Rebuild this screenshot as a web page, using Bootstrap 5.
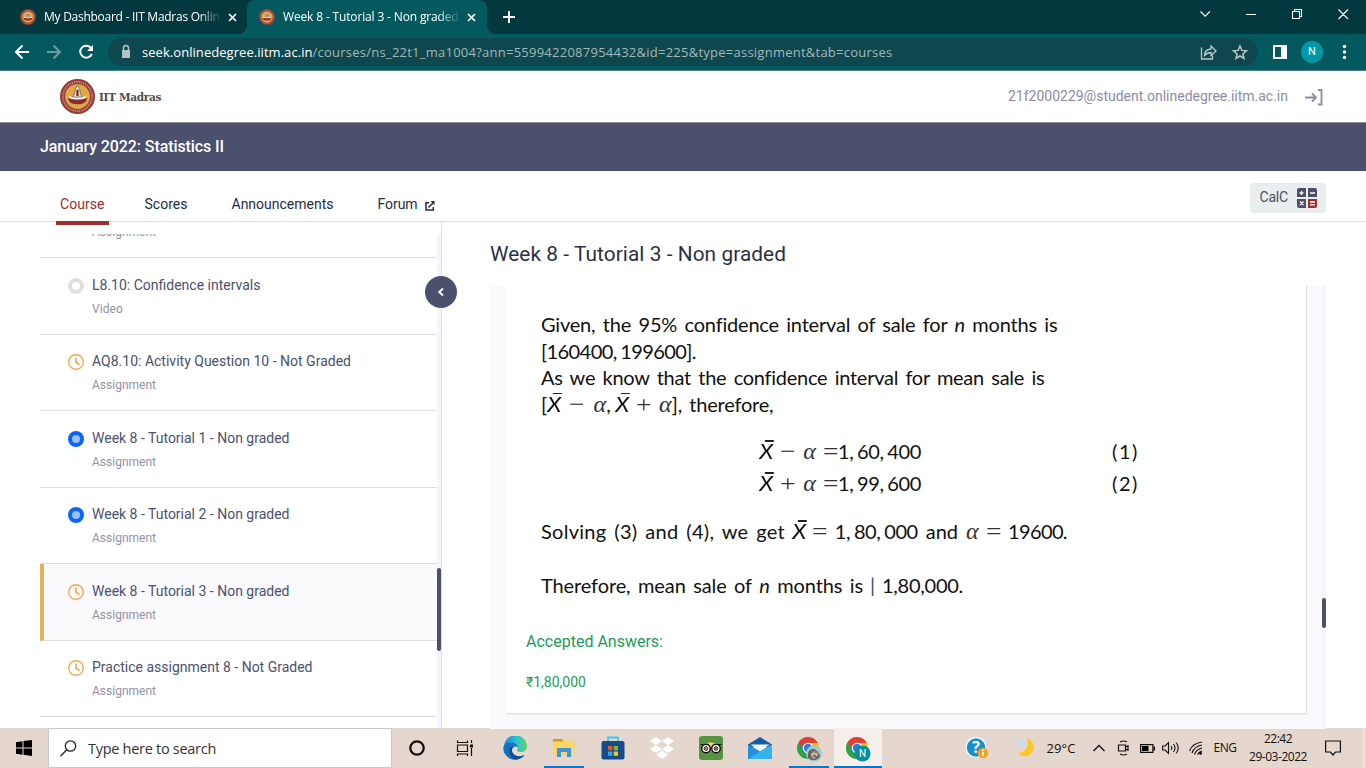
<!DOCTYPE html>
<html lang="en">
<head>
<meta charset="utf-8">
<title>Week 8 - Tutorial 3 - Non graded</title>
<link href="https://cdn.jsdelivr.net/npm/bootstrap@5.3.0/dist/css/bootstrap.min.css" rel="stylesheet">
<script src="https://cdn.jsdelivr.net/npm/bootstrap@5.3.0/dist/js/bootstrap.bundle.min.js"></script>
<style>
body{width:1366px;height:768px;overflow:hidden;font-family:Roboto,sans-serif;font-size:14px;line-height:20px;color:#4b516c;background:#fff}
svg{display:block;flex:none}
[data-w]{white-space:nowrap;display:inline-block}
.segoe{font-family:"Open Sans",sans-serif}
/* browser chrome */
.tabstrip{height:34px;background:#02383e;color:#fff;font-size:12px}
.tab-a{width:247px;padding-left:20px}
.tab-b{width:240px;padding-left:12px;background:#04595f;border-radius:8px 8px 0 0;position:relative}
.tab-b::before,.tab-b::after{content:"";position:absolute;bottom:0;width:8px;height:8px}
.tab-b::before{left:-8px;background:radial-gradient(circle at 0 0,transparent 7.5px,#04595f 8px)}
.tab-b::after{right:-8px;background:radial-gradient(circle at 100% 0,transparent 7.5px,#04595f 8px)}
.tab-label{width:176px;overflow:hidden;margin-left:8px;-webkit-mask-image:linear-gradient(90deg,#000 88%,transparent 101%)}
.toolbar{height:37px;background:#04595f;border-bottom:1px solid #4a8388}
.omni{width:1150px;height:28px;border-radius:14px;background:#0e474d;color:#a3b8ba;font-size:13px}
.avatar-n{width:22px;height:22px;border-radius:50%;background:#0097a7;color:#fff;font-size:11px}
/* site */
.site-head{height:52px;border-bottom:1px solid #8c8a90;padding-left:60px}
.brand-name{font:bold 10.5px/20px "DejaVu Serif",serif;color:#4c4c4c}
.mail-id{color:#8d8ba3;margin-bottom:1px}
.title-bar{height:48px;background:#4b516c;color:#fff;font-size:16px;font-weight:500;padding-left:40px}
.tabs-row{height:51px;border-bottom:1px solid #dfdfdf;color:#252b3f}
.tabs-row .tab-item{padding-top:23px;height:54px}
.tabs-row .current{color:#a02c2c;border-bottom:4px solid #a02c2c;width:53px;margin-left:56px;padding-left:4px}
.calc-btn{width:76px;height:30px;background:#eaeeee;border-radius:4px;margin:12px 40px 0 auto;padding-left:9.5px;color:#4b516c}
.work{height:506px}
.side{width:442px;border-right:1px solid #dcdce0;padding:12px 0 0 40px}
.side-list{width:397px;overflow:hidden}
.lesson{height:76.5px;border-bottom:1px solid #dfdfdf;padding:16.8px 0 0 28px}
.lesson.picked{background:#fafafd;border-left:4px solid #e2b25f;padding-left:24px}
.lesson svg{margin:3.2px 8px 0 0}
.lesson .kind{font-size:12px;line-height:18px;color:#9391a6;margin-top:5px}
.track{width:4px;background:#f3f6fe}
.track i{display:block;width:4px;background:#4b516c;border-radius:2px}
.fold{position:absolute;left:425px;top:54px;width:32px;height:32px;border-radius:50%;background:#4b516c}
.pane{width:836px;margin-left:48px;padding-top:19px}
.pane h1{font-size:20.8px;line-height:26px;font-weight:400;color:#2b3044;margin:0 0 19px;height:26px}
.scroller{height:443px;background:#fafafd;padding-left:16px}
.sheet{width:801px;height:428px;background:#fff;border-right:1px solid #dfdfe3;border-bottom:1px solid #dfdfe3;padding:25px 0 0 20px;box-shadow:0 1px 1px #f1f1f4}
.tex{font:20px/26.5px Lato,sans-serif;color:#111;padding-left:15px;width:640px;word-spacing:2.5px}
.tex .ln{height:26.5px;white-space:nowrap;display:flex;justify-content:space-between}
.num{word-spacing:-1px}
.xb{font-style:italic;position:relative;font-size:20.5px;transform:scaleX(1.12)}
.xb::before{content:"";position:absolute;left:4.5px;top:2px;width:8px;height:1.6px;background:#222}
.al{font-family:"Liberation Serif",serif;font-style:italic;font-size:24px;color:#333}
.op{font-family:"Liberation Serif",serif;font-size:24px;color:#333;transform:scaleX(1.15)}
.ok{color:#1d9a59}
/* taskbar */
.taskbar{height:40px;background:#e6d7ce;color:#111}
.start{width:48px;flex:none}
.find{width:344px;flex:none;border:1px solid #c9c9c9;background:#fff;padding-left:11px;font-size:15px;color:#333}
.app{width:49px;height:40px;position:relative;display:flex;align-items:center;justify-content:center;flex:none}
.app.open::after{content:"";position:absolute;left:5px;width:40px;bottom:0;height:2px;background:#0078d7}
.app.front{background:linear-gradient(#f4efeb,#f4efeb) 1px 0/48px 40px no-repeat}
.app.front::after{left:1px;width:48px}
.tray{display:grid;flex:none;grid-template-columns:50px 47px 38px 24px 24px 24px 24px 26px 32px 74px 36px 10px 5px;margin-left:70px;place-items:center;font-size:12px}
.clock{line-height:18px;font-size:12px}
</style>
</head>
<body>
<svg width="0" height="0" class="position-absolute">
<defs>
<g id="seal"><circle cx="18" cy="18" r="18" fill="#943b35"/><circle cx="18" cy="18" r="15" fill="none" stroke="#c98f86" stroke-width="2" stroke-dasharray="1.2 1.1"/><circle cx="18" cy="18" r="12.8" fill="#dca848"/><path d="M8 19.500h20q-1 6.500-10 6.500t-10-6.500z" fill="#8b2c25"/><path d="M9 18.600q9 3 18 0" stroke="#fff" stroke-width="2" fill="none"/><path d="M18 6q3 5 3 9.500l2 3H13l2-3q0-4.500 3-9.500z" fill="#f3ead8" stroke="#555" stroke-width=".7"/><path d="M16.800 11h2.400v6.500h-2.400z" fill="#8b2c25"/></g>
<g id="clk" fill="none" stroke="#f6a94c"><circle cx="8" cy="8" r="7.300" stroke-width="1.400"/><path d="M8 3.500V8.300l3.600 2.300" stroke-width="1.700"/></g>
<g id="dot"><circle cx="8" cy="8" r="8" fill="#0b64f9"/><circle cx="8" cy="8" r="4" fill="#9bc1fc"/></g>
<g id="chrome"><circle cx="12" cy="12" r="11" fill="#fbc116"/><path d="M12 12L2.500 6.500A11 11 0 0 0 11.500 23l5-8z" fill="#2aa150"/><path d="M12 1A11 11 0 0 1 21.800 7H12L5.500 11 2.500 6.500A11 11 0 0 1 12 1z" fill="#dd4037"/><circle cx="12" cy="12" r="5.300" fill="#fff"/><circle cx="12" cy="12" r="4.200" fill="#3478e5"/></g>
<linearGradient id="eg" x1="0" y1="0" x2="1" y2="0"><stop offset="0" stop-color="#168bd9"/><stop offset=".55" stop-color="#2cc3d2"/><stop offset="1" stop-color="#63d45a"/></linearGradient>
</defs></svg>

<div class="tabstrip segoe d-flex">
  <div class="tab-a d-flex align-items-center"><svg width="16" height="16" viewBox="0 0 36 36"><use href="#seal"/></svg><div class="tab-label"><span data-w="175.500">My Dashboard - IIT Madras Onlin</span></div>
    <svg class="ms-2" width="9" height="9" stroke="#fff" stroke-width="1.700"><path d="M1 1l7 7M8 1l-7 7"/></svg></div>
  <div class="tab-b d-flex align-items-center"><svg width="16" height="16" viewBox="0 0 36 36"><use href="#seal"/></svg><div class="tab-label"><span data-w="175.500">Week 8 - Tutorial 3 - Non graded</span></div>
    <svg class="ms-2" width="9" height="9" stroke="#fff" stroke-width="1.700"><path d="M1 1l7 7M8 1l-7 7"/></svg></div>
  <svg class="align-self-center" style="margin-left:16px" width="12" height="12" stroke="#fff" stroke-width="2"><path d="M6 0v12M0 6h12"/></svg>
  <svg class="ms-auto" width="170" height="34" fill="none" stroke="#fff" stroke-width="1.100"><path d="M4.500 11.500l4.700 4.700 4.700-4.700M50 14.500h10M96.500 11.500h7v7h-7zM98.500 11v-1.500h7v7h-1.500M142.500 9.500l9.500 9.500M152 9.500l-9.500 9.500"/></svg>
</div>
<div class="toolbar d-flex align-items-center">
  <svg width="108" height="36" fill="none" stroke="#fff" stroke-width="2"><path d="M29 18H16.500M22.500 11.500L16 18l6.500 6.500"/><path d="M47 18h12.500M53.500 11.500L60 18l-6.500 6.500" stroke="#6a9b9f"/><path d="M91 14a6 6 0 1 0 .8 6"/><path d="M93 11v6h-6z" fill="#fff" stroke="none"/></svg>
  <div class="omni segoe d-flex align-items-center">
    <svg width="34" height="28"><path d="M14 12h8v8h-8z" fill="#b3c4c6"/><path d="M15.500 12v-2a2.500 2.500 0 0 1 5 0v2" fill="none" stroke="#b3c4c6" stroke-width="1.500"/></svg>
    <span data-w="170.500" style="color:#fff">seek.onlinedegree.iitm.ac.in</span><span data-w="580">/courses/ns_22t1_ma1004?ann=5599422087954432&amp;id=225&amp;type=assignment&amp;tab=courses</span>
    <svg class="ms-auto" width="60" height="28" fill="none" stroke="#b9c8c9" stroke-width="1.300"><path d="M3.500 9.500v11.500h11v-3.500M6.500 17.500q0-6 6.500-6.500V8l5 5-5 4.500v-3q-4 0-6.500 3z"/><path d="M42 8l1.800 4.400 4.700.4-3.600 3.100 1.100 4.600-4-2.500-4 2.500 1.100-4.600-3.600-3.100 4.700-.4z" stroke-width="1.500"/></svg>
  </div>
  <svg width="43" height="36"><path d="M16 12h11v12H16z" fill="none" stroke="#fff" stroke-width="2"/><path d="M23 11h6v14h-6z" fill="#fff"/></svg>
  <div class="avatar-n d-flex align-items-center justify-content-center">N</div>
  <svg width="43" height="36" fill="#fff"><circle cx="21.500" cy="12.500" r="1.700"/><circle cx="21.500" cy="18" r="1.700"/><circle cx="21.500" cy="23.500" r="1.700"/></svg>
</div>

<header class="site-head d-flex align-items-center">
  <svg width="35" height="35" viewBox="0 0 36 36"><use href="#seal"/></svg>
  <span class="brand-name" style="margin-left:4px" data-w="62">IIT Madras</span>
  <span class="mail-id ms-auto" data-w="280">21f2000229@student.onlinedegree.iitm.ac.in</span>
  <svg width="78" height="20" fill="none" stroke="#8d8ba3" stroke-width="1.800"><path d="M17 10.500h10.500M24 6.500l4 4-4 4M30 3h3.500v14.500H30"/></svg>
</header>
<div class="title-bar d-flex align-items-center"><span data-w="184">January 2022: Statistics II</span></div>
<nav class="tabs-row d-flex align-items-start">
  <div class="tab-item current"><span data-w="44.500">Course</span></div>
  <div class="tab-item" style="margin-left:35.500px"><span data-w="43">Scores</span></div>
  <div class="tab-item" style="margin-left:44px"><span data-w="102">Announcements</span></div>
  <div class="tab-item d-flex" style="margin-left:44px"><span data-w="40">Forum</span><svg style="margin:7px 0 0 7px" width="10" height="10" fill="none" stroke="#252b3f" stroke-width="1.500"><path d="M4 1.700H1V9h7.300V6M3.500 6.500L8 2"/><path d="M5.500 0H9.500v4z" fill="#252b3f" stroke="none"/></svg></div>
  <div class="calc-btn d-flex align-items-center"><span style="margin-bottom:2px" data-w="28.500">CalC</span>
    <svg style="margin-left:9px" width="20" height="20"><path d="M2 0h7v9H0V2a2 2 0 0 1 2-2M11 0h7a2 2 0 0 1 2 2v7h-9zM0 11h9v9H2a2 2 0 0 1-2-2z" fill="#4b516c"/><path d="M11 11h9v7a2 2 0 0 1-2 2h-7z" fill="#a02c2c"/><path d="M4.500 3v4M2.500 5h4M13 5h5M3 13.500l3.500 3.500M6.500 13.500L3 17M13 14h5M13 16.800h5" stroke="#fff" stroke-width="1.300"/></svg></div>
</nav>

<main class="work d-flex position-relative">
  <aside class="side d-flex">
    <div class="side-list">
      <div class="lesson d-flex" style="height:24px;padding-top:0"><div class="kind" style="margin:-11px 0 0 24px"><span data-w="64">Assignment</span></div></div>
      <div class="lesson d-flex"><svg width="16" height="16"><circle cx="8" cy="8" r="6" fill="none" stroke="#e0e0e0" stroke-width="4"/></svg><div><span data-w="168.500">L8.10: Confidence intervals</span><div class="kind"><span data-w="31">Video</span></div></div></div>
      <div class="lesson d-flex"><svg width="16" height="16"><use href="#clk"/></svg><div><span data-w="259">AQ8.10: Activity Question 10 - Not Graded</span><div class="kind"><span data-w="64">Assignment</span></div></div></div>
      <div class="lesson d-flex"><svg width="16" height="16"><use href="#dot"/></svg><div><span data-w="197.500">Week 8 - Tutorial 1 - Non graded</span><div class="kind"><span data-w="64">Assignment</span></div></div></div>
      <div class="lesson d-flex"><svg width="16" height="16"><use href="#dot"/></svg><div><span data-w="197.500">Week 8 - Tutorial 2 - Non graded</span><div class="kind"><span data-w="64">Assignment</span></div></div></div>
      <div class="lesson picked d-flex"><svg width="16" height="16"><use href="#clk"/></svg><div><span data-w="197.500">Week 8 - Tutorial 3 - Non graded</span><div class="kind"><span data-w="64">Assignment</span></div></div></div>
      <div class="lesson d-flex"><svg width="16" height="16"><use href="#clk"/></svg><div><span data-w="220.500">Practice assignment 8 - Not Graded</span><div class="kind"><span data-w="64">Assignment</span></div></div></div>
    </div>
    <div class="track"><i style="margin-top:334px;height:83px"></i></div>
  </aside>
  <div class="fold d-flex align-items-center justify-content-center"><svg width="8" height="10" fill="none" stroke="#fff" stroke-width="1.800"><path d="M6 1.500L2.200 5 6 8.500"/></svg></div>
  <section class="pane">
    <h1><span data-w="296">Week 8 - Tutorial 3 - Non graded</span></h1>
    <div class="scroller d-flex justify-content-between">
      <article class="sheet">
        <div class="tex">
          <div class="ln"><span data-w="516">Given, the 95% confidence interval of sale for <i>n</i> months is</span></div>
          <div class="ln"><span class="num" data-w="155">[160400, 199600].</span></div>
          <div class="ln"><span data-w="503">As we know that the confidence interval for mean sale is</span></div>
          <div class="d-flex">
            <span>[</span><div class="ln" style="width:58px;margin-left:1px"><span class="xb">X</span><span class="op">−</span><span class="al">α</span></div><span>,</span>
            <div class="ln" style="width:56px;margin-left:5px"><span class="xb">X</span><span class="op">+</span><span class="al">α</span></div><span>],</span><span style="margin-left:7px" data-w="84">therefore,</span></div>
          <div class="d-flex" style="margin:21px 0 0 219px">
            <div class="ln" style="width:78px"><span class="xb">X</span><span class="op">−</span><span class="al">α</span><span class="op">=</span></div><span class="num" data-w="83">1, 60, 400</span><span style="margin-left:191px" data-w="27">(1)</span></div>
          <div class="d-flex" style="margin:5.500px 0 0 219px">
            <div class="ln" style="width:78px"><span class="xb">X</span><span class="op">+</span><span class="al">α</span><span class="op">=</span></div><span class="num" data-w="83">1, 99, 600</span><span style="margin-left:191px" data-w="27">(2)</span></div>
          <div class="ln" style="width:526px;margin-top:21.500px"><span data-w="244">Solving (3) and (4), we get</span><span class="xb">X</span><span class="op">=</span><span class="num" data-w="83">1, 80, 000</span><span>and</span><span class="al">α</span><span class="op">=</span><span data-w="59">19600.</span></div>
          <div class="ln" style="width:422px;margin-top:27.500px"><span data-w="322">Therefore, mean sale of <i>n</i> months is</span><span style="color:#34479a">|</span><span data-w="81">1,80,000.</span></div>
        </div>
        <div class="ok" style="margin-top:33px;font-size:16px"><span data-w="137">Accepted Answers:</span></div>
        <div class="ok" style="margin-top:20px"><span data-w="60">₹1,80,000</span></div>
      </article>
      <div class="track"><i style="margin-top:312px;height:30px"></i></div>
    </div>
  </section>
</main>

<footer class="taskbar segoe d-flex">
  <div class="start d-flex align-items-center justify-content-center"><svg width="16" height="16"><path d="M0 2.200L6.500 1.300V7.500H0zM7.500 1.100L16 0v7.500H7.500zM0 8.500h6.500v6.200L0 13.800zM7.500 8.500H16V16l-8.500-1.200z"/></svg></div>
  <div class="find d-flex align-items-center"><svg width="17" height="17" fill="none" stroke="#222" stroke-width="1.300"><circle cx="10.500" cy="6" r="5.200"/><path d="M6.800 9.800L.5 16.200"/></svg><span style="margin:1px 0 0 11px;font-size:14.500px" data-w="128">Type here to search</span></div>
  <div class="app"><svg width="16" height="16"><circle cx="8" cy="8" r="6.700" fill="none" stroke="#111" stroke-width="2.300"/></svg></div>
  <div class="app"><svg width="20" height="16" fill="none" stroke="#111" stroke-width="1.200"><path d="M1.500 5h10v6.500h-10zM1.500.500v2h10v-2M1.500 16v-2h10v2M15.500 0v3M15.500 8v8"/><path d="M14 4.500h3v3h-3z" fill="#111" stroke="none"/></svg></div>
  <div class="app"><svg width="24" height="24"><path d="M1 11A11.500 11.500 0 0 1 24 10.500c0 4-3 5.500-6 5.500-2 0-4-.5-4-1.800 0-1 1-1.500 1-3 0-2.500-2.500-4.200-5.500-4.200C5 7 1 9 1 11z" fill="url(#eg)"/><path d="M.3 12C.5 8.500 4 6.500 8 6.500c4.500 0 7 2.500 7 5-2-2.500-7-.5-6 4 1 4.500 7 6 12.500 3.500C18 24.500 9 25.500 4 20.500 1.500 18 .3 15.500.3 12z" fill="#1671c4"/><path d="M7 11.500c-2 5 1 11 6 12 3-.3 6-1.500 8.500-4.500-5 2.500-11 1-12.300-3-.7-2 0-4 1-5z" fill="#124c91"/></svg></div>
  <div class="app open"><svg width="22" height="20"><path d="M0 1h9l2 3H0z" fill="#d99b14"/><path d="M0 3.500h10l1-1h10.500V18H0z" fill="#fbd667"/><path d="M4 19v-9h14v9h-4v-5H8v5z" fill="#3d94dc"/></svg></div>
  <div class="app"><svg width="24" height="24"><path d="M7 6V1.500h10V6" fill="none" stroke="#43c2f2" stroke-width="1.800"/><rect x=".5" y="5" width="23" height="18.500" rx="2" fill="#174d86"/><path d="M7 10h4.300v4.300H7z" fill="#f05223"/><path d="M12.700 10H17v4.300h-4.300z" fill="#7fba2c"/><path d="M7 15.500h4.300v4.300H7z" fill="#2ba8ef"/><path d="M12.700 15.500H17v4.300h-4.300z" fill="#ffc21c"/></svg></div>
  <div class="app"><svg width="24" height="22" fill="#fff"><path d="M6 0l6 4-6 4-6-4zM18 0l6 4-6 4-6-4zM6 8l6 4-6 4-6-4zM18 8l6 4-6 4-6-4zM12 13.500l6 4.500-6 4-6-4z"/></svg></div>
  <div class="app"><svg width="24" height="24"><rect width="24" height="24" rx="3" fill="#579442"/><path d="M3 8.500q9-4 18 0l-9 7z" fill="#f0d46a"/><g fill="#fff" stroke="#111" stroke-width="1.500"><circle cx="7" cy="12.500" r="4.300"/><circle cx="17" cy="12.500" r="4.300"/></g><path d="M1.500 8.500h4M22.500 8.500h-4" stroke="#111"/><g fill="none" stroke="#111"><circle cx="7" cy="12.500" r="1.800"/><circle cx="17" cy="12.500" r="1.800"/></g><circle cx="7" cy="12.500" r="1" fill="#b34c35"/><circle cx="17" cy="12.500" r="1" fill="#365940"/></svg></div>
  <div class="app"><svg width="24" height="22"><path d="M0 7.500L12 0l12 7.500V10H0z" fill="#155ca8"/><path d="M0 7.500l12 7 12-7V22H0z" fill="#2291dd"/><path d="M24 7.500V22H0z" fill="#36b2ef"/><path d="M2.500 7.500h19L12 14z" fill="#f5fafe"/></svg></div>
  <div class="app open"><svg width="28" height="28"><use href="#chrome" x="1" y="2"/><circle cx="19" cy="19.500" r="8" fill="#9bcbd2"/><path d="M13 24q-1-8 4-9 6-1 8 8-5 6-12 1z" fill="#6c625c"/><path d="M16 16l2 2 4-2 1 5-4 4-3-3z" fill="#c7b4a4"/><path d="M16 18h2M20 18h2M18 22h3" stroke="#2e2929"/></svg></div>
  <div class="app open front"><svg width="28" height="28"><use href="#chrome" x="1" y="2"/><circle cx="18.500" cy="19.500" r="8" fill="#078f9b"/><text x="18.500" y="23" text-anchor="middle" font-family="Roboto" font-size="10" fill="#fff">N</text></svg></div>
  <div class="tray">
    <div><svg width="24" height="22"><circle cx="11" cy="10.500" r="10.500" fill="#fff"/><circle cx="11" cy="10.500" r="9.300" fill="#158fd0"/><text x="11" y="16" text-anchor="middle" font-family="Open Sans" font-weight="700" font-size="16" fill="#fff">?</text><circle cx="18" cy="16" r="5.200" fill="#f0a51e"/><path d="M18 12.500v1.500M18 15v4" stroke="#fff" stroke-width="1.500"/></svg></div>
    <div><svg width="22" height="20"><path d="M12 0a9.300 9.300 0 1 1-10 14.500C9 16 15 9 12 0z" fill="#fcc624"/><path d="M3 8.500a2.700 2.700 0 0 1 0-5 3.500 3.500 0 0 1 6.500 0 2.500 2.500 0 0 1 0 5z" fill="#c5dff0"/></svg></div>
    <span data-w="29" style="font-size:13px;margin-right:14px">29°C</span>
    <div><svg width="12" height="8" fill="none" stroke="#111" stroke-width="1.300"><path d="M.5 7L6 1.500 11.500 7"/></svg></div>
    <div><svg width="13" height="16" fill="none" stroke="#111" stroke-width="1.200"><path d="M1.500 5h7v6h-7zM8.500 7l2.500-1.300v4.600L8.500 9M3 2q3.500-2 7 0M3 14q3.500 2 7 0"/></svg></div>
    <div><svg width="15" height="9"><path d="M.6.600h12.300v7.800H.6zM13 3h1.400v3H13" fill="none" stroke="#111" stroke-width="1.200"/><path d="M2 2h6.500v5H2z"/></svg></div>
    <div><svg width="18" height="14" fill="none" stroke="#111" stroke-width="1.100"><path d="M.6 5h2.500L6.500 1.500v11L3.100 9H.6zM9 5q1.500 2 0 4M11.500 3q3 4 0 8M14 1.500q4.500 5.500 0 11"/></svg></div>
    <div><svg width="14" height="14" fill="none" stroke="#111" stroke-width="1.100"><path d="M.5 10Q3 2.500 13 1M3 12Q5 5.500 13 4M5.500 13.500Q7 8.500 13 7M8.500 13.500Q9.500 11 13 10"/><circle cx="11.500" cy="12.300" r="1.500" fill="#111" stroke="none"/></svg></div>
    <span data-w="23">ENG</span>
    <div class="clock text-center"><div><span data-w="28">22:42</span></div><div><span data-w="58">29-03-2022</span></div></div>
    <div><svg width="16" height="16" fill="none" stroke="#111" stroke-width="1.200"><path d="M.6 1h14.800v11H10.500l-2.500 3-2.500-3H.6z"/></svg></div>
    <div></div><div class="h-100 border-start border-secondary-subtle"></div>
  </div>
</footer>
<script>
// Track each label out to its set measure (data-w, in px).
document.querySelectorAll('[data-w]').forEach(function (el) {
  var gap = parseFloat(el.dataset.w) - el.getBoundingClientRect().width;
  el.style.letterSpacing = (gap / el.textContent.length) + 'px';
});
</script>
</body>
</html>
